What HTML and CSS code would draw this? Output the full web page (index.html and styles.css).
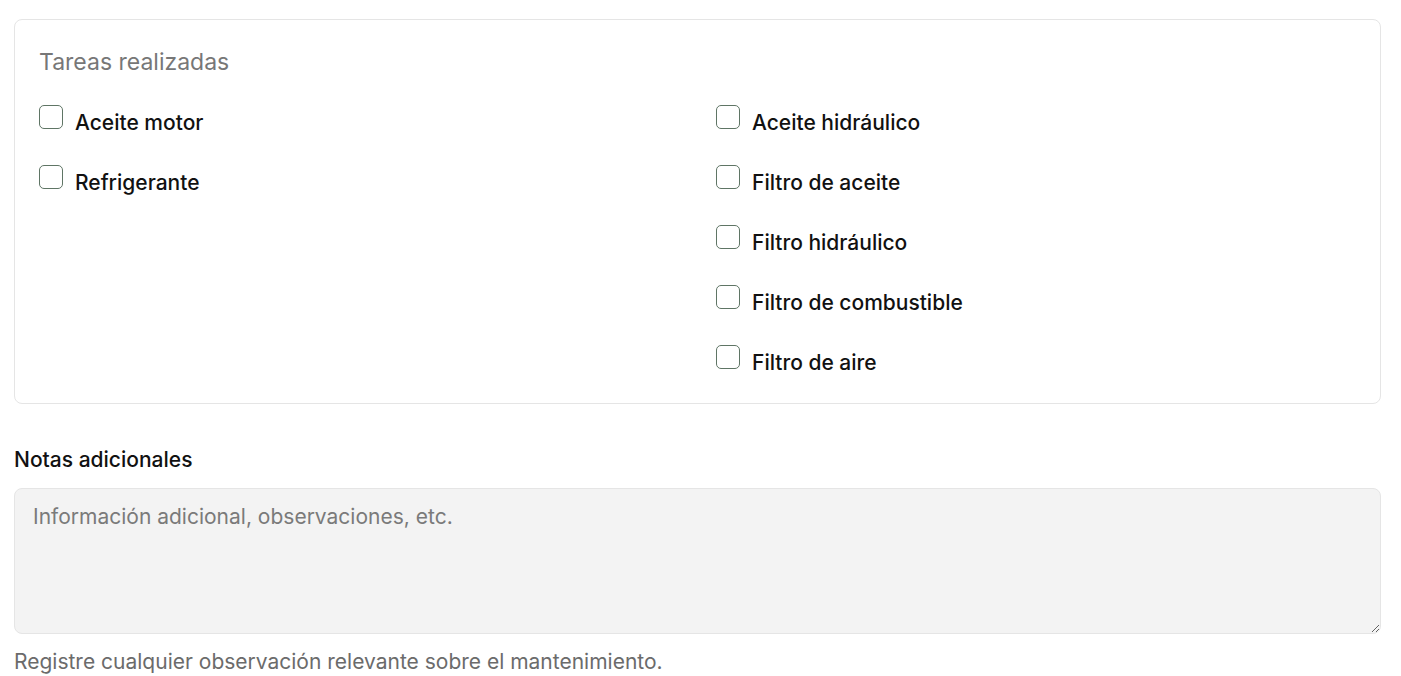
FILE: index.html
```html
<!DOCTYPE html>
<html lang="es">
<head>
<meta charset="utf-8">
<title>Mantenimiento</title>
<link rel="stylesheet" href="styles.css">
</head>
<body>
<div class="page">
  <fieldset class="card">
    <div class="card-title">Tareas realizadas</div>
    <div class="columns">
      <div class="col">
        <label class="check"><span class="box"></span><span class="text">Aceite motor</span></label>
        <label class="check"><span class="box"></span><span class="text">Refrigerante</span></label>
      </div>
      <div class="col">
        <label class="check"><span class="box"></span><span class="text">Aceite hidráulico</span></label>
        <label class="check"><span class="box"></span><span class="text">Filtro de aceite</span></label>
        <label class="check"><span class="box"></span><span class="text">Filtro hidráulico</span></label>
        <label class="check"><span class="box"></span><span class="text">Filtro de combustible</span></label>
        <label class="check"><span class="box"></span><span class="text">Filtro de aire</span></label>
      </div>
    </div>
  </fieldset>
  <div class="field">
    <label class="field-label" for="notas">Notas adicionales</label>
    <textarea id="notas" class="textarea" placeholder="Información adicional, observaciones, etc."></textarea>
    <div class="help">Registre cualquier observación relevante sobre el mantenimiento.</div>
  </div>
</div>
</body>
</html>
```
FILE: styles.css
```css
html, body {
  margin: 0;
  padding: 0;
  background: #ffffff;
  font-family: Inter, "Noto Sans", sans-serif;
  color: #111111;
}
.page {
  padding: 19px 20px 0 14px;
}
.card {
  margin: 0;
  border: 1px solid #e5e5e5;
  border-radius: 8px;
  padding: 24px 24px 27px 24px;
  min-width: 0;
}
.card-title {
  font-size: 23px;
  line-height: 34px;
  color: #777777;
  margin-bottom: 27px;
  padding-top: 1px;
}
.columns {
  display: grid;
  grid-template-columns: 1fr 1fr;
  column-gap: 37px;
  margin-top: -1px;
}
.col {
  display: flex;
  flex-direction: column;
  gap: 29px;
}
.check {
  display: flex;
  align-items: flex-start;
  gap: 12px;
}
.box {
  width: 22px;
  height: 22px;
  border: 1px solid #5f7565;
  border-radius: 5px;
  flex: none;
}
.text {
  font-size: 21px;
  line-height: 27px;
  padding-top: 4px;
  font-weight: 500;
  color: #111111;
}
.field {
  margin-top: 42px;
  display: flex;
  flex-direction: column;
}
.field-label {
  font-size: 21px;
  line-height: 28px;
  font-weight: 500;
  color: #111111;
  margin-bottom: 14px;
}
.textarea {
  box-sizing: border-box;
  height: 146px;
  width: 100%;
  background: #f3f3f3;
  border: 1px solid #e5e5e5;
  border-radius: 8px;
  padding: 14px 18px;
  font-family: Inter, "Noto Sans", sans-serif;
  font-size: 21px;
  line-height: 28px;
  color: #111111;
  resize: vertical;
  margin: 0;
}
.textarea::placeholder {
  color: #7a7a7a;
}
.help {
  margin-top: 16px;
  font-size: 21px;
  line-height: 24px;
  color: #6b6b6b;
}
```
